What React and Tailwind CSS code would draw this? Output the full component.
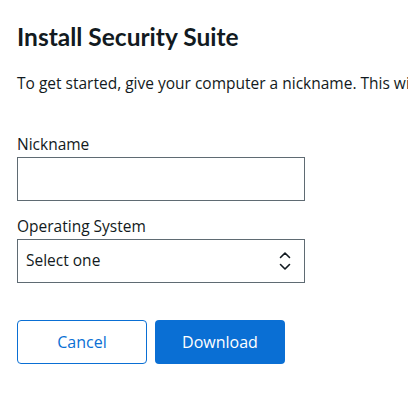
const UpDownIcon = () => (
    <svg width="12" height="22" viewBox="0 0 12 22" fill="none" stroke="currentColor" strokeWidth="1.6" strokeLinecap="round" strokeLinejoin="round">
        <path d="M1.5 7.5 6 3l4.5 4.5" />
        <path d="M1.5 14.5 6 19l4.5-4.5" />
    </svg>
);

const App = () => {
    return (
        <div className="w-[408px] h-[398px] overflow-hidden bg-white font-['Open_Sans',sans-serif] text-[#121a21]">
            <div className="pl-[17px] pt-[22px]">
                {/* Title */}
                <h1 className="font-['Lato',sans-serif] text-[24.5px] leading-[30px] font-bold whitespace-nowrap">Install Security Suite</h1>

                <p className="mt-[20px] text-[15.5px] leading-[22px] whitespace-nowrap">
                    To get started, give your computer a nickname. This will help you identify it later.
                </p>

                {/* Form */}
                <div className="mt-[39px] w-[288px]">
                    <label className="block text-[15.5px] leading-[22px]">Nickname</label>
                    <input
                        type="text"
                        className="mt-[2px] block w-full h-[44px] border border-[#5f6b73] bg-white px-[10px] outline-none"
                    />

                    <label className="mt-[14px] block text-[15.5px] leading-[22px]">Operating System</label>
                    <div className="mt-[2px] flex items-center justify-between h-[44px] border border-[#5f6b73] pl-[8px] pr-[13px]">
                        <span className="text-[15.5px]">Select one</span>
                        <UpDownIcon />
                    </div>
                </div>

                {/* Actions */}
                <div className="mt-[37px] flex gap-[8px]">
                    <button className="w-[130px] h-[44px] rounded-[4px] border border-[#0a6fd4] text-[#0a6fd4] text-[16px]">
                        Cancel
                    </button>
                    <button className="w-[130px] h-[44px] rounded-[4px] bg-[#0a6fd4] text-white text-[16px]">
                        Download
                    </button>
                </div>
            </div>
        </div>
    );
};

export default App;
